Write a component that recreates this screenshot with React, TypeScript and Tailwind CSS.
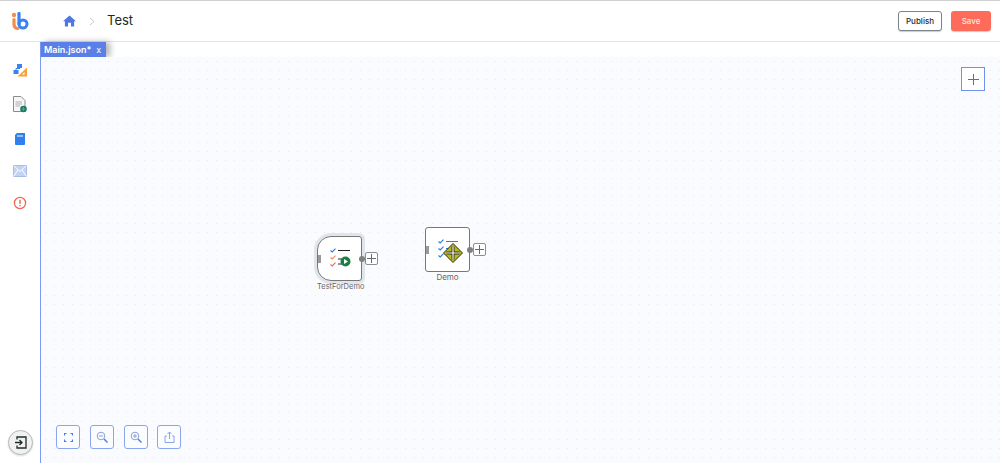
import React from "react";

const Check = ({ color }: { color: string }) => (
  <svg width="6" height="5" viewBox="0 0 6 5" fill="none">
    <path d="M0.5 2.5 L2.2 4 L5.5 0.7" stroke={color} strokeWidth="1.2" />
  </svg>
);

const NodeIcon = ({ demo }: { demo?: boolean }) => {
  const colors = demo ? ["#2f7fe0", "#2f7fe0", "#2f7fe0"] : ["#2f7fe0", "#f08a5d", "#ef6a5a"];
  return (
    <div className="flex flex-col gap-[2px] pb-[3px]">
      {colors.map((c, i) => (
        <div key={i} className="flex items-center gap-[2px]">
          <Check color={c} />
          <div className={`h-px w-[12px] ${demo ? "bg-[#2f7fe0]" : i === 0 ? "bg-[#222222]" : "bg-transparent"}`} />
        </div>
      ))}
    </div>
  );
};

const Port = () => (
  <div className="flex items-center">
    <div className="z-10 -ml-[3px] h-[6px] w-[6px] rounded-full bg-[#808080]" />
    <div className="flex h-[13px] w-[13px] items-center justify-center rounded-[2px] border border-[#8a8f96] bg-white">
      <svg width="9" height="9" viewBox="0 0 9 9" stroke="#666b70" strokeWidth="1">
        <path d="M4.5 0 V9 M0 4.5 H9" />
      </svg>
    </div>
  </div>
);

const ToolButton = ({ children }: { children: React.ReactNode }) => (
  <button className="flex h-[24px] w-[24px] items-center justify-center rounded-[3px] border border-[#8aa6ee] bg-[#fbfcfe]">
    {children}
  </button>
);

export default function App() {
  return (
    <div className="flex h-[463px] w-[1000px] flex-col overflow-hidden border-t border-[#d0d0d0] bg-white" style={{ fontFamily: "Inter, sans-serif" }}>
      <div className="flex flex-1">
        {/* sidebar */}
        <aside className="flex w-[40px] flex-col items-center">
          <div className="flex h-[41px] w-full items-center justify-center border-b border-[#e3e3e3]">
            <svg width="18" height="19" viewBox="0 0 18 19" fill="none">
              <circle cx="3" cy="3" r="2.2" fill="#f58b4c" />
              <path d="M3 7.5 V12.5 a4 4 0 0 0 4 4" stroke="#f58b4c" strokeWidth="3.2" strokeLinecap="round" />
              <path d="M8 1.5 V12" stroke="#3b82f0" strokeWidth="3.2" strokeLinecap="round" />
              <circle cx="12" cy="12" r="4" stroke="#3b82f0" strokeWidth="3" />
            </svg>
          </div>
          <div className="mt-[20px] flex flex-col items-center">
            <svg width="16" height="16" viewBox="0 0 16 16">
              <rect x="5" y="2" width="5" height="4" fill="#3b82f0" />
              <rect x="1.5" y="8" width="5" height="4" fill="#3b82f0" />
              <path d="M4 8 V6.5 H8" stroke="#3b82f0" fill="none" />
              <path fillRule="evenodd" d="M15 5.5 V14.5 H5.5 Z M12.5 10 V12.5 H10 Z" fill="#f9a13a" />
            </svg>
            <svg className="mt-[18px]" width="16" height="17" viewBox="0 0 16 17" fill="none">
              <path d="M1.5 0.5 H9 L13 4.5 V15.5 H1.5 Z" fill="#f6f6f6" stroke="#8c8c8c" />
              <path d="M3.5 6 H10 M3.5 8 H10 M3.5 10 H8" stroke="#b0b0b0" />
              <circle cx="11.5" cy="13" r="3.3" fill="#1f7a5c" />
              <path d="M9.5 13 H13.5 M11.5 11 V15" stroke="#5fa5c8" strokeWidth="0.8" />
            </svg>
            <svg className="mt-[18px]" width="16" height="16" viewBox="0 0 16 16">
              <path d="M5 2 H13 V13 a1 1 0 0 1 -1 1 H4 a1 1 0 0 1 -1 -1 V4 Z" fill="#2f80ed" />
              <path d="M6 4 V6 M8 4 V6 M10 4 V6" stroke="#ffffff" />
            </svg>
            <svg className="mt-[16px]" width="16" height="16" viewBox="0 0 16 16">
              <rect x="1.5" y="2.5" width="13" height="11" fill="#c3d3f3" stroke="#a9bde8" />
              <path d="M1.5 2.5 L8 8.5 L14.5 2.5 M1.5 13.5 L6 7 M14.5 13.5 L10 7" stroke="#ffffff" fill="none" />
            </svg>
            <svg className="mt-[16px]" width="16" height="16" viewBox="0 0 16 16" fill="none">
              <circle cx="8" cy="8" r="5.6" stroke="#f0654f" strokeWidth="1.3" />
              <path d="M8 4.8 V9 M8 10 V11.3" stroke="#f0654f" strokeWidth="1.4" />
            </svg>
          </div>
          <button className="mb-[8px] mt-auto flex h-[25px] w-[25px] items-center justify-center rounded-full border border-[#b8b8b8] bg-[#f1f1f1] shadow-[0_1px_2px_rgba(0,0,0,0.15)]">
            <svg width="13" height="13" viewBox="0 0 13 13" fill="none" stroke="#1f2d2a" strokeWidth="1.3">
              <path d="M3 3.5 V1 H12 V12 H3 V9.5" />
              <path d="M1 6.5 H8 M5.5 4 L8 6.5 L5.5 9" />
            </svg>
          </button>
        </aside>

        {/* main */}
        <main className="flex flex-1 flex-col">
          <header className="flex h-[41px] items-center border-b border-[#e3e3e3] pl-[23px] pr-[9px]">
            <svg width="13" height="12" viewBox="0 0 14 13" fill="#4d78e0">
              <path d="M7 0.5 L14 6.8 H12 V12.5 H8.6 V8.5 H5.4 V12.5 H2 V6.8 H0 Z" />
            </svg>
            <svg className="ml-[13px]" width="6" height="9" viewBox="0 0 6 9" fill="none" stroke="#c4c8cc">
              <path d="M1 1 L5 4.5 L1 8" />
            </svg>
            <span className="ml-[12px] text-[13px] text-[#1c2b1c]">Test</span>
            <div className="ml-auto flex items-center gap-[9px]">
              <button className="flex h-[20px] w-[44px] items-center justify-center rounded-[3px] border border-[#7d8488] bg-white text-[8px] font-medium text-[#1f2933] shadow-[0_1px_1px_rgba(0,0,0,0.2)]">
                Publish
              </button>
              <button className="flex h-[20px] w-[40px] items-center justify-center rounded-[3px] bg-[#ff6b5b] text-[8px] font-medium text-[#ffe6e0] shadow-[0_1px_1px_rgba(0,0,0,0.2)]">
                Save
              </button>
            </div>
          </header>

          <div className="flex flex-1 flex-col border-l border-[#7b9bf0]">
            <div className="flex h-[15px] bg-white">
              <div className="flex h-[15px] w-[65px] items-center bg-[#5b7fe8] pl-[3px] text-[9px] font-semibold text-white shadow-[4px_0_6px_rgba(0,0,0,0.3)]">
                Main.json*
                <span className="ml-[5px] font-normal">x</span>
              </div>
            </div>
            <div className="relative flex-1 bg-[#fafbfe] bg-[radial-gradient(#e6e8ee_0.6px,transparent_0.7px)] bg-[length:9px_9px]">
              <button className="absolute right-[15px] top-[10px] flex h-[24px] w-[24px] items-center justify-center border border-[#6f92f0] bg-white">
                <svg width="11" height="11" viewBox="0 0 11 11" stroke="#3f6fe8">
                  <path d="M5.5 0 V11 M0 5.5 H11" />
                </svg>
              </button>

              {/* TestForDemo node */}
              <div className="absolute left-[276px] top-[179px] flex w-[70px] flex-col items-start">
                <div className="flex items-center">
                  <div className="relative flex h-[45px] w-[45px] items-center justify-center rounded-l-[14px] rounded-r-[3px] border border-[#777777] bg-white shadow-[0_0_0_3px_#e1e5eb]">
                    <div className="absolute left-0 top-[18px] h-[8px] w-[3px] bg-[#9a9a9a]" />
                    <NodeIcon />
                    <svg className="absolute left-[20px] top-[19px]" width="13" height="11" viewBox="0 0 13 11">
                      <path d="M0 3 H4 M0 8 H4" stroke="#222222" />
                      <circle cx="7.5" cy="5.5" r="5" fill="#1a7f46" />
                      <path d="M6 3 L10 5.5 L6 8 Z" fill="#ffffff" />
                    </svg>
                  </div>
                  <Port />
                </div>
                <span className="relative z-10 mt-[1px] whitespace-nowrap text-[7.5px] leading-[10px] text-[#666666]">TestForDemo</span>
              </div>

              {/* Demo node */}
              <div className="absolute left-[384px] top-[170px] flex w-[70px] flex-col items-start">
                <div className="flex items-center">
                  <div className="relative flex h-[45px] w-[45px] items-center justify-center rounded-[3px] border border-[#777777] bg-white">
                    <div className="absolute left-0 top-[18px] h-[8px] w-[3px] bg-[#9a9a9a]" />
                    <NodeIcon demo />
                    <svg className="absolute left-[17px] top-[15px]" width="20" height="20" viewBox="0 0 20 20">
                      <path d="M10 0.5 L19.5 10 L10 19.5 L0.5 10 Z" fill="#b8b820" stroke="#2c2c10" />
                      <path d="M10 3.5 V16.5 M3.5 10 H16.5" stroke="#2c2c10" strokeWidth="3" />
                      <path d="M10 3.5 V16.5 M3.5 10 H16.5" stroke="#ffffff" strokeWidth="1.2" />
                    </svg>
                  </div>
                  <Port />
                </div>
                <span className="mt-[1px] w-[45px] text-center text-[8px] leading-[8px] text-[#666666]">Demo</span>
              </div>

              {/* zoom controls */}
              <div className="absolute bottom-[14px] left-[15px] flex gap-[10px]">
                <ToolButton>
                  <svg width="9" height="9" viewBox="0 0 9 9" fill="none" stroke="#4d78e8" strokeWidth="1.2">
                    <path d="M0.5 2.5 V0.5 H2.5 M6.5 0.5 H8.5 V2.5 M8.5 6.5 V8.5 H6.5 M2.5 8.5 H0.5 V6.5" />
                  </svg>
                </ToolButton>
                <ToolButton>
                  <svg width="12" height="12" viewBox="0 0 12 12" fill="none" stroke="#8aa0d8">
                    <circle cx="5" cy="5" r="3.8" />
                    <path d="M3 5 H7" />
                    <path d="M8 8 L11.5 11.5" stroke="#4d78e8" strokeWidth="1.4" />
                  </svg>
                </ToolButton>
                <ToolButton>
                  <svg width="12" height="12" viewBox="0 0 12 12" fill="none" stroke="#8aa0d8">
                    <circle cx="5" cy="5" r="3.8" />
                    <path d="M3 5 H7 M5 3 V7" />
                    <path d="M8 8 L11.5 11.5" stroke="#4d78e8" strokeWidth="1.4" />
                  </svg>
                </ToolButton>
                <div className="-ml-px">
                  <ToolButton>
                    <svg width="11" height="12" viewBox="0 0 11 12" fill="none" stroke="#8aa4ea">
                      <path d="M3 5 H1 V11.5 H10 V5 H8 M5.5 8 V1 M3.5 3 L5.5 1 L7.5 3" />
                    </svg>
                  </ToolButton>
                </div>
              </div>
            </div>
          </div>
        </main>
      </div>
    </div>
  );
}
